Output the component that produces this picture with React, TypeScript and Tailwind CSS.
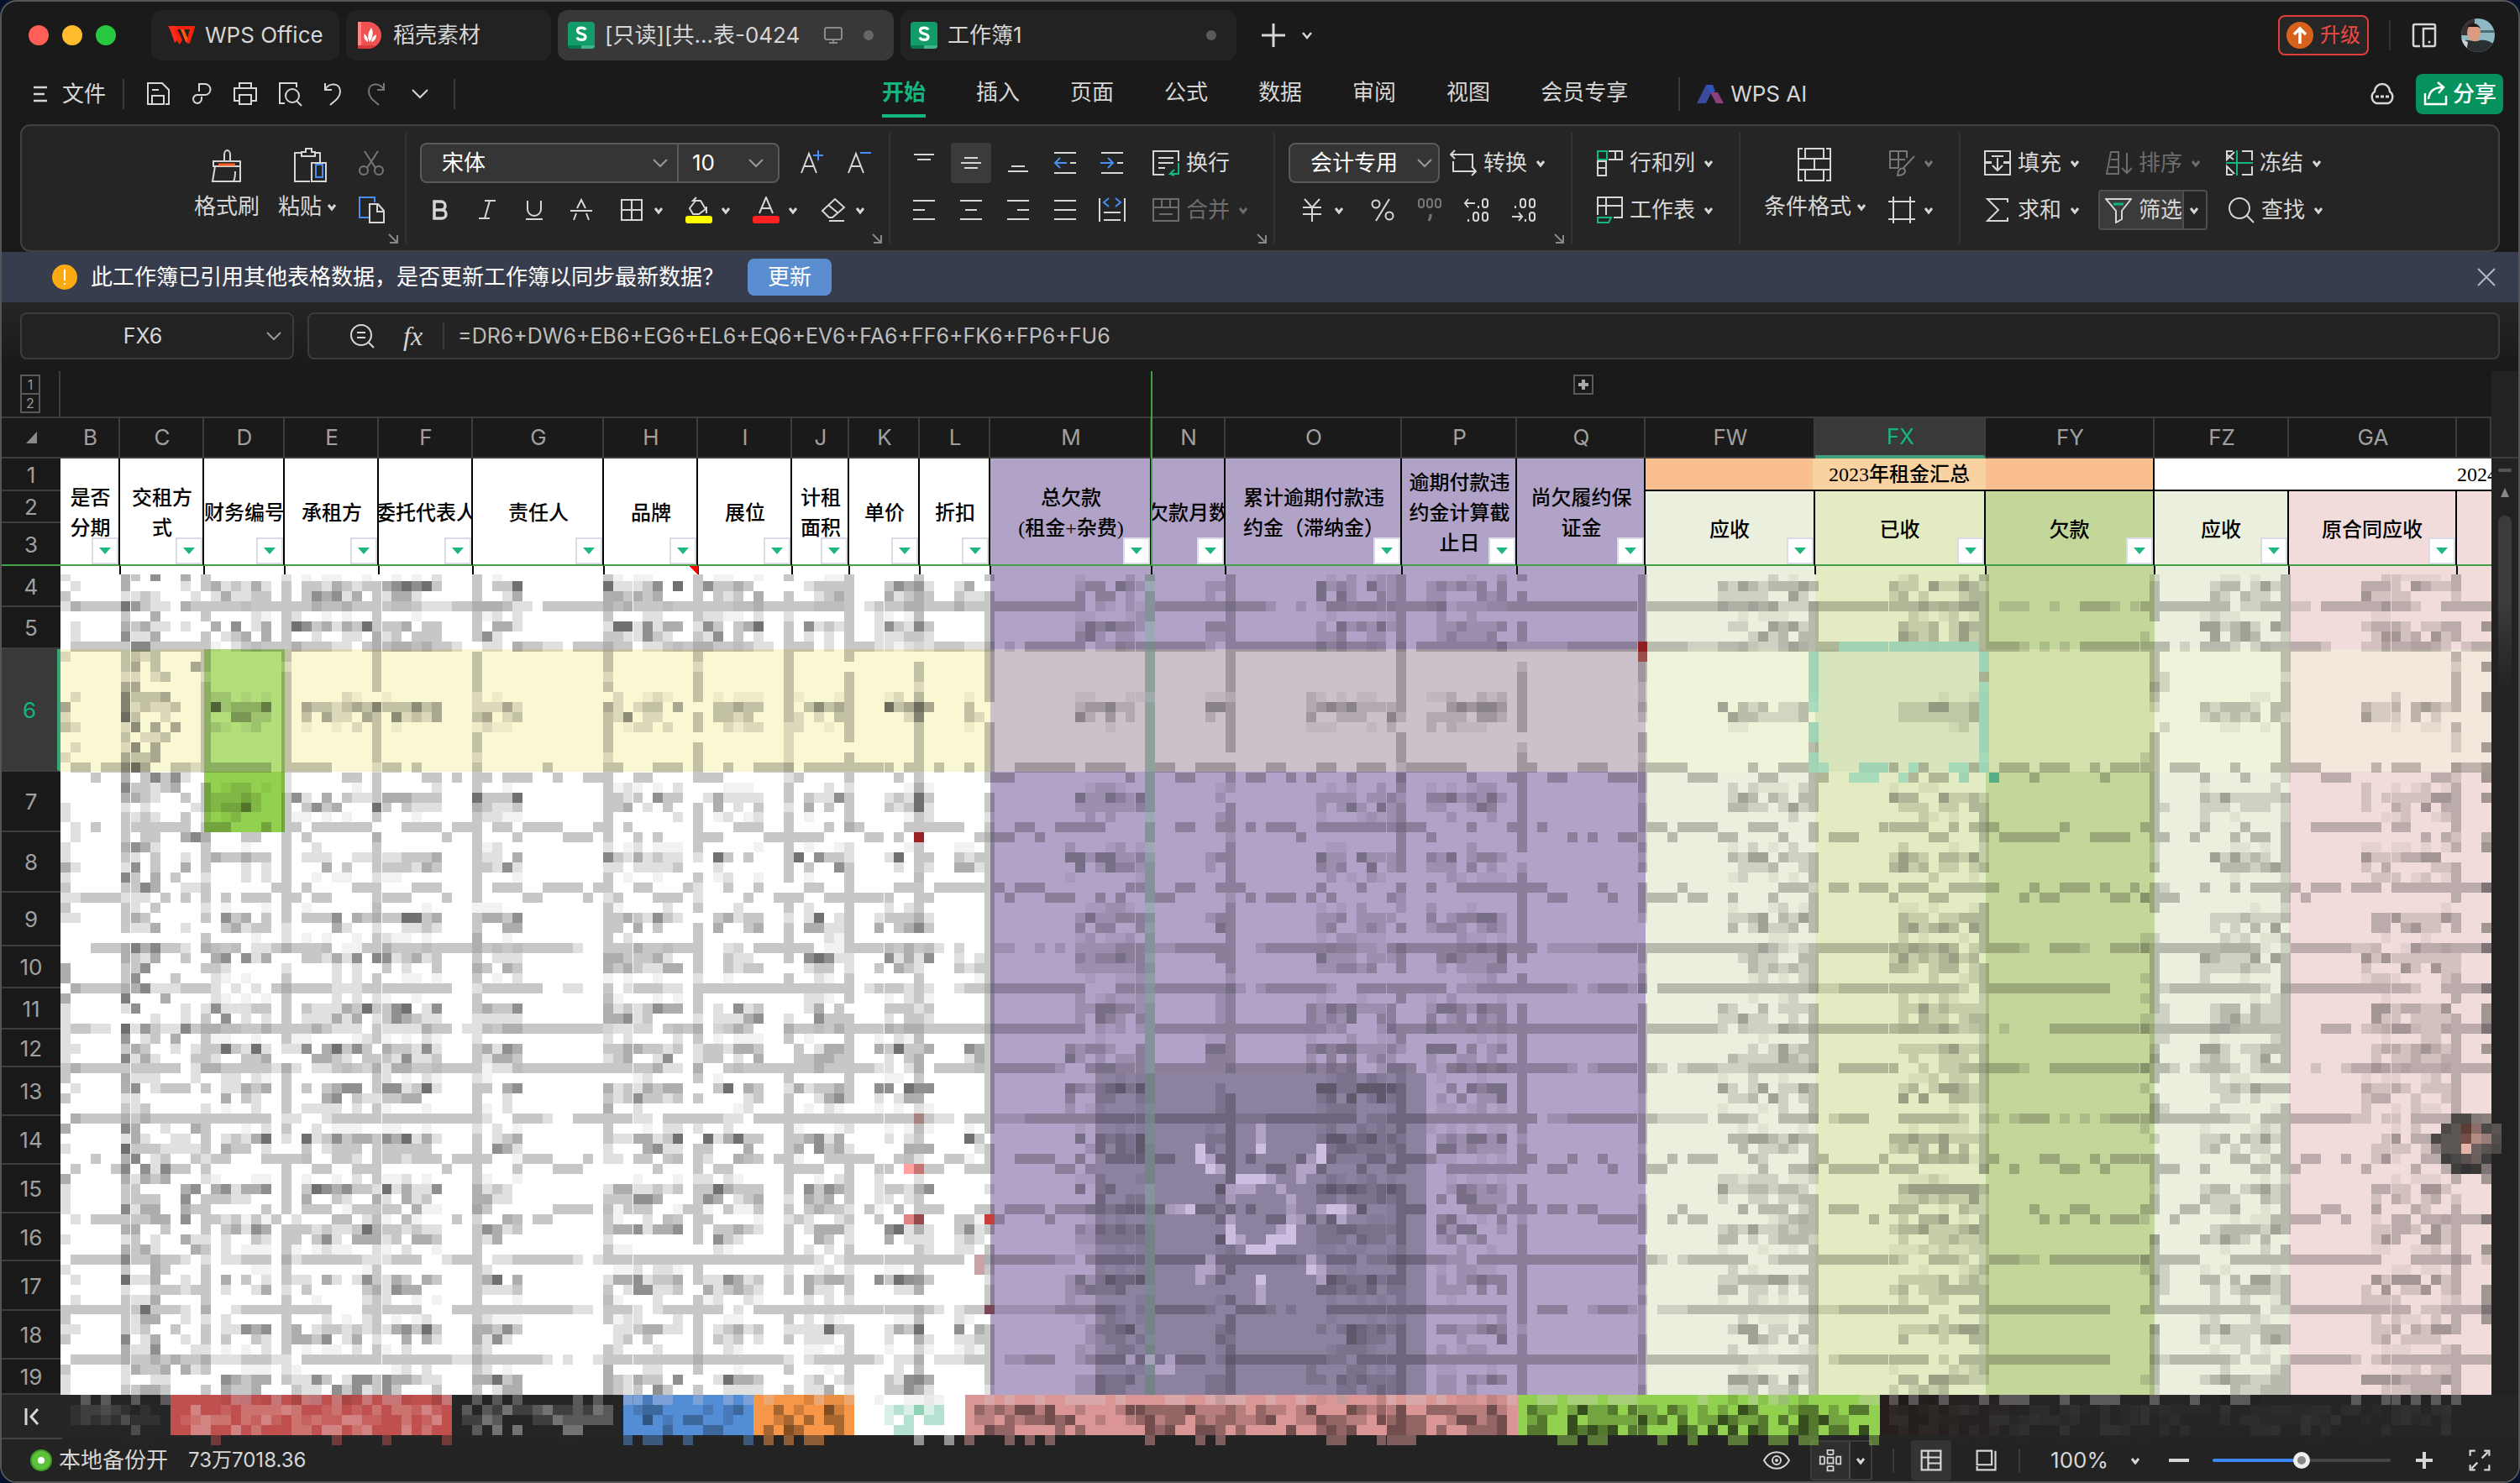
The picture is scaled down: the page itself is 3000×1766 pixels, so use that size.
import React from "react";
import clsx from "clsx";

type IconProps = { children: React.ReactNode; className?: string; box?: string };

const Icon = ({ children, className = "size-8", box = "0 0 32 32" }: IconProps) => (
  <svg
    viewBox={box}
    className={clsx("shrink-0", className)}
    fill="none"
    stroke="currentColor"
    strokeWidth="2"
    aria-hidden="true"
  >
    {children}
  </svg>
);

const Chevron = () => (
  <Icon className="size-6" box="0 0 24 24">
    <path d="M8 10l4 5 4-5" strokeWidth="3" />
  </Icon>
);

const WideChevron = () => (
  <Icon className="size-6 text-[#999]" box="0 0 24 24">
    <path d="M4 8l8 8 8-8" />
  </Icon>
);

/* ---------- TITULO ---------- */

const SheetLogo = () => (
  <Icon className="size-8" box="0 0 32 32">
    <g stroke="none">
      <rect width="32" height="32" rx="4" fill="#129c69" />
      <path d="M0 28h16v4H4a4 4 0 0 1-4-4z" fill="#087a4e" />
      <path d="M16 28h16a4 4 0 0 1-4 4H16z" fill="#3db587" />
    </g>
    <path
      d="M21 9.500C19.500 6.500 11.500 6 11.500 10.500c0 5 9.500 2.500 9.500 7.500 0 4.500-8.500 4.500-10 .5"
      stroke="#fff"
      strokeWidth="3.200"
    />
  </Icon>
);

const TitleBar = () => (
  <header className="flex h-[78px] items-center pl-8 pr-7 pt-0.5">
    <div className="flex gap-4">
      <button aria-label="关闭窗口" className="size-6 rounded-full bg-[#ff5f57]" />
      <button aria-label="最小化" className="size-6 rounded-full bg-[#febc2e]" />
      <button aria-label="最大化" className="size-6 rounded-full bg-[#28c840]" />
    </div>

    <nav className="ml-[42px] flex gap-2">
      <button className="flex h-[60px] w-56 items-center gap-3 rounded-xl bg-[#222] pl-5">
        <Icon className="size-8">
          <g stroke="none">
            <path d="M0 5h31c1 0 1.500 1 1 2l-6 18c-.5 1-3 1-3.500 0L15 9h-4l6 12-1.500 4c-.5 1.500-3 1.500-3.500 0z" fill="#f3230b" />
            <path d="M8 25L1 5h9l2 4H7.500l4 12z" fill="#ff2a1a" />
            <path d="M16 9h10l-3 10z" fill="#222" />
            <path d="M15 9h4l4.500 11-2 5z" fill="#ff5a10" />
          </g>
        </Icon>
        WPS Office
      </button>
      <button className="flex h-[60px] w-[244px] items-center gap-3 rounded-xl bg-[#222] pl-3">
        <Icon className="size-8">
          <g stroke="none">
            <path d="M2 0h12a16 16 0 0 1 0 32H2z" fill="#f0524f" />
            <path d="M2 0h4v32H2z" fill="#f88" />
            <path d="M2 28h22a16 16 0 0 1-10 4H2z" fill="#d33a38" />
            <path d="M16 24c-3-6-2-11 2-17 3 6 2 11-2 17zM14 24c-4-2-5-5-4.500-10 3.500 3 5 6 4.500 10zM18 24c0-4 2-7 6-9 0 5-2 8-6 9z" fill="#fff" />
          </g>
        </Icon>
        稻壳素材
      </button>
      <button className="flex h-[60px] w-[400px] items-center gap-3 rounded-xl bg-[#383838] px-3">
        <SheetLogo />
        [只读][共…表-0424
        <Icon className="ml-auto size-6 text-[#888]" box="0 0 24 24">
          <rect x="2" y="3" width="20" height="14" rx="2" />
          <path d="M12 17v4M7 21h10" />
        </Icon>
        <span className="mx-3 size-3 rounded-full bg-[#666]" />
      </button>
      <button className="flex h-[60px] w-[400px] items-center gap-3 rounded-xl bg-[#222] px-3">
        <SheetLogo />
        工作簿1
        <span className="ml-auto mr-3 size-3 rounded-full bg-[#5a5a5a]" />
      </button>
    </nav>

    <button aria-label="新建" className="ml-7">
      <Icon>
        <path d="M16 2v28M2 16h28" strokeWidth="3" />
      </Icon>
    </button>
    <button aria-label="更多标签" className="ml-3">
      <Icon className="size-6" box="0 0 24 24">
        <path d="M7 9l5 6 5-6" strokeWidth="2.500" />
      </Icon>
    </button>

    <button className="ml-auto flex h-12 items-center gap-2 rounded-lg border-2 border-[#e03e3e] bg-[#262626] px-2 text-2xl text-[#ee4a45]">
      <Icon>
        <circle cx="16" cy="16" r="16" fill="#d8621c" stroke="none" />
        <path d="M16 26V8M9 15l7-7 7 7" stroke="#fff" strokeWidth="3.500" />
      </Icon>
      升级
    </button>
    <span className="ml-6 h-9 w-0.5 bg-[#333]" />
    <button aria-label="手机视图" className="ml-6">
      <Icon>
        <path d="M11 29H5a2 2 0 0 1-2-2V5a2 2 0 0 1 2-2h22a2 2 0 0 1 2 2v22a2 2 0 0 1-2 2H15V8h13" strokeWidth="2.500" />
        <circle cx="22" cy="24" r="1.500" fill="currentColor" stroke="none" />
      </Icon>
    </button>
    <button aria-label="账户" className="ml-7 overflow-hidden rounded-full">
      <Icon className="size-10" box="0 0 40 40">
        <g stroke="none">
          <rect width="40" height="40" fill="#8fb9c2" />
          <path d="M22 14h18v3H22z" fill="#4e6b74" />
          <path d="M0 0h16v20H0z" fill="#3a2f33" />
          <ellipse cx="15" cy="17" rx="8" ry="11" fill="#d99c80" />
          <path d="M7 10c2-6 13-6 16 2l-3-2H9z" fill="#22191a" />
          <path d="M0 28c8-6 14 2 22-2 8-1 14 2 18 6v8H0z" fill="#2a3031" />
          <path d="M0 24l8 4-2 12H0z" fill="#cfd3d6" />
        </g>
      </Icon>
    </button>
  </header>
);

/* ---------- MENU ---------- */

const quickIcons: { name: string; art: React.ReactNode; dim?: boolean }[] = [
  {
    name: "保存",
    art: <path d="M8 28H4V3h17l8 8v17h-4M9 28V18h14v10zM9 11h8" />,
  },
  {
    name: "输出",
    art: <path d="M13 13V4h7a6 6 0 0 1 0 13h-8a5 5 0 1 0 4 5v-3" />,
  },
  {
    name: "打印",
    art: <path d="M9 9V3h14v6M8 24H3V9h26v15h-5M9 17h14v11H9z" />,
  },
  {
    name: "打印预览",
    art: (
      <>
        <path d="M25 8V3H5v24h6" />
        <circle cx="20" cy="18" r="8" />
        <path d="M25 24l6 6" />
      </>
    ),
  },
  { name: "撤销", art: <path d="M7 3v8h8M7 11c4-9 18-9 18 2 0 7-6 11-12 16" /> },
  { name: "恢复", dim: true, art: <path d="M25 3v8h-8M25 11C21 2 7 2 7 13c0 7 6 11 12 16" /> },
  { name: "更多", art: <path d="M7 11l9 9 9-9" /> },
];

const menus = ["开始", "插入", "页面", "公式", "数据", "审阅", "视图", "会员专享"];

const MenuBar = () => (
  <div className="flex h-[68px] items-center pb-1 pl-9 pr-[18px]">
    <button className="flex items-center gap-4">
      <Icon className="size-5" box="0 0 20 20">
        <path d="M2 2h16M2 10h13M2 18h16" strokeWidth="2.500" />
      </Icon>
      文件
    </button>
    <span className="ml-5 h-9 w-0.5 bg-[#3a3a3a]" />
    <div className="ml-6 flex items-center gap-5">
      {quickIcons.map(({ name, art, dim }) => (
        <button key={name} aria-label={name} className={clsx(dim && "text-[#777]")}>
          <Icon>{art}</Icon>
        </button>
      ))}
    </div>
    <span className="ml-6 h-9 w-0.5 bg-[#3a3a3a]" />

    <nav className="ml-[508px] flex gap-15">
      {menus.map((menu, i) => (
        <button
          key={menu}
          className={clsx(
            "h-14 border-b-4",
            i === 0 ? "border-[#13b67e] font-bold text-[#13b67e]" : "border-transparent"
          )}
        >
          {menu}
        </button>
      ))}
    </nav>
    <span className="ml-15 h-10 w-0.5 bg-[#3a3a3a]" />
    <button className="ml-5 flex items-center gap-2">
      <Icon>
        <g stroke="none">
          <path d="M0 27L11 5h8l1 3-9 19z" fill="#3b4a9c" />
          <path d="M11 5h8l3 8-6 2z" fill="#3353b8" />
          <path d="M16 14h9l7 13h-9z" fill="#8b3f7c" />
        </g>
      </Icon>
      WPS AI
    </button>

    <button aria-label="云服务" className="ml-auto">
      <Icon className="size-8">
        <path d="M9 27a8 8 0 0 1-2-14 9 9 0 0 1 18 0 8 8 0 0 1-2 14z" strokeWidth="2.500" />
        <path d="M8 19h4M14 19h4M20 19h4" strokeWidth="3" />
      </Icon>
    </button>
    <button className="ml-6 flex h-12 items-center gap-1 rounded-lg bg-[#06925d] px-2 font-medium text-white">
      <Icon>
        <path d="M3 15v13h25V18M7 22c1-10 7-14 17-14M18 2l7 6-6 7" strokeWidth="2.500" />
      </Icon>
      分享
    </button>
  </div>
);

/* ---------- RIBBON ---------- */

type ToolProps = { name: string; children: React.ReactNode; active?: boolean; dim?: boolean };

const Tool = ({ name, children, active, dim }: ToolProps) => (
  <button
    aria-label={name}
    className={clsx(
      "flex size-12 items-center justify-center rounded",
      active && "bg-[#3b3b3b]",
      dim && "text-[#777]"
    )}
  >
    <Icon>{children}</Icon>
  </button>
);

const DropTool = ({ name, children, dim }: ToolProps) => (
  <button aria-label={name} className={clsx("flex h-12 items-center pl-1", dim && "text-[#777]")}>
    <Icon className="mr-1 size-8">{children}</Icon>
    <Chevron />
  </button>
);

type LabelToolProps = { label: string; children: React.ReactNode; dim?: boolean; plain?: boolean };

const LabelTool = ({ label, children, dim, plain }: LabelToolProps) => (
  <button className={clsx("flex h-12 items-center whitespace-nowrap pl-2", dim && "text-[#6d6d6d]")}>
    <Icon className="mr-2 size-8">{children}</Icon>
    <span className="mr-1">{label}</span>
    {!plain && <Chevron />}
  </button>
);

const Group = ({
  children,
  className,
  launcher,
  last,
}: {
  children: React.ReactNode;
  className?: string;
  launcher?: boolean;
  last?: boolean;
}) => (
  <section
    className={clsx("relative my-2 flex pt-3", !last && "border-r-2 border-[#333]", className)}
  >
    {children}
    {launcher && (
      <button aria-label="更多设置" className="absolute bottom-0 right-2 text-[#888]">
        <Icon className="size-3" box="0 0 12 12">
          <path d="M1 1l9 9M11 2v9H2" />
        </Icon>
      </button>
    )}
  </section>
);

const Rows = ({ children }: { children: React.ReactNode }) => (
  <div className="flex flex-col items-start gap-2">{children}</div>
);

const Ribbon = () => (
  <div className="mx-[22px] flex h-[152px] rounded-xl border-2 border-[#414141] bg-[#252525]">
    <Group className="gap-4 pl-[202px] pr-4" launcher>
      <button className="flex h-26 w-[84px] flex-col items-center gap-2 pt-1">
        <Icon className="size-11" box="0 0 44 44">
          <path d="M19 18V10a3.500 5 0 1 1 7 0v8M6 18h32v6H6zM8 24L5 42h33V24M30 42c2-4 2-8 2-12" />
          <path d="M12 22h20" stroke="#ff5a1f" strokeWidth="3" />
        </Icon>
        格式刷
      </button>
      <button className="flex h-26 w-[82px] flex-col items-center gap-2 pt-1">
        <Icon className="size-11" box="0 0 44 44">
          <path d="M12 8H4v34h18M28 8h6v12M12 12V7h5V3h7v4h4v5zM24 42V20h17v22z" />
          <path d="M29 22h8v15h-8z" stroke="#4a8df0" />
        </Icon>
        <span className="flex items-center whitespace-nowrap">
          粘贴
          <Chevron />
        </span>
      </button>
      <div className="-ml-2 flex flex-col gap-2">
        <Tool name="剪切" dim>
          <path d="M8 2l13 20M24 2L11 22" />
          <circle cx="7" cy="25" r="5" />
          <circle cx="25" cy="25" r="5" />
        </Tool>
        <Tool name="复制">
          <path d="M13 25H2V1h18v6" stroke="#4a8df0" />
          <path d="M14 9h10l7 8v14H14zM23 9v9h8" />
        </Tool>
      </div>
    </Group>

    <Group className="pl-4 pr-3" launcher>
      <Rows>
        <div className="flex items-center">
          <div className="mr-[14px] flex h-12 items-center rounded-lg border-2 border-[#5a5a5a] bg-[#353535] text-white">
            <input aria-label="字体" defaultValue="宋体" className="w-[248px] bg-transparent pl-6 outline-none" />
            <button aria-label="选择字体" className="w-14 pl-6">
              <WideChevron />
            </button>
            <span className="h-full w-0.5 bg-[#5a5a5a]" />
            <input aria-label="字号" defaultValue="10" className="w-20 bg-transparent pl-4 outline-none" />
            <button aria-label="选择字号" className="w-[38px]">
              <WideChevron />
            </button>
          </div>
          <Tool name="增大字号">
            <path d="M4 28L13 5l9 23M7 20h12" />
            <path d="M24 1v12M18 7h12" stroke="#4a8df0" />
          </Tool>
          <span className="w-2" />
          <Tool name="减小字号">
            <path d="M4 28L13 5l9 23M7 20h12" />
            <path d="M18 4h13" stroke="#4a8df0" />
          </Tool>
        </div>
        <div className="flex gap-4">
          <div className="flex gap-2">
            <Tool name="加粗">
              <path d="M9 6h8a5 5 0 0 1 0 10H9zM9 16h9a5 5 0 0 1 0 10H9z" strokeWidth="3.500" />
            </Tool>
            <Tool name="倾斜">
              <path d="M13 5h13M6 26h13M19 5l-6 21" />
            </Tool>
            <Tool name="下划线">
              <path d="M8 5v10a8 8 0 0 0 16 0V5M6 27h20" />
            </Tool>
            <Tool name="删除线">
              <path d="M11 14l5-10 5 10M3 17h26M10 20l-3 8M22 20l3 8" />
            </Tool>
          </div>
          <DropTool name="边框">
            <path d="M4 4h24v24H4zM16 4v24M4 16h24" />
          </DropTool>
          <DropTool name="填充颜色">
            <path d="M13 1l-4 4h9l6 10-8 6H9l-4-7 7-9M25 12v8" />
            <rect x="0" y="23" width="32" height="9" rx="3" fill="#ff0" stroke="none" />
          </DropTool>
          <DropTool name="字体颜色">
            <path d="M8 20L16 1l8 19M11 14h10" />
            <rect x="0" y="23" width="32" height="9" rx="3" fill="#f22" stroke="none" />
          </DropTool>
          <DropTool name="清除">
            <path d="M11 25L3 17 18 3l11 10-14 12zM10 10l12 10M11 29h18" />
          </DropTool>
        </div>
      </Rows>
    </Group>

    <Group className="w-[458px] pl-4" launcher>
      <Rows>
        <div className="flex gap-2">
          <Tool name="顶端对齐">
            <path d="M4 6h24M8 12h16" />
          </Tool>
          <Tool name="垂直居中" active>
            <path d="M8 10h16M4 16h24M8 22h16" />
          </Tool>
          <Tool name="底端对齐">
            <path d="M8 20h16M4 26h24" />
          </Tool>
          <Tool name="减少缩进">
            <path d="M3 4h26M22 16h7M3 28h26" />
            <path d="M18 16H4M10 10l-6 6 6 6" stroke="#4a8df0" />
          </Tool>
          <Tool name="增加缩进">
            <path d="M3 4h26M22 16h7M3 28h26" />
            <path d="M2 16h15M11 10l6 6-6 6" stroke="#4a8df0" />
          </Tool>
          <div className="pl-2">
            <LabelTool label="换行" plain>
              <path d="M14 30H1V2h30v12M7 10h18M7 16h18M7 22h8" />
              <path d="M31 16v13H21l5-5M21 29l5 2" stroke="#13b67e" />
            </LabelTool>
          </div>
        </div>
        <div className="flex gap-2">
          <Tool name="左对齐">
            <path d="M3 5h26M3 16h14M3 27h26" />
          </Tool>
          <Tool name="水平居中">
            <path d="M3 5h26M9 16h14M3 27h26" />
          </Tool>
          <Tool name="右对齐">
            <path d="M3 5h26M15 16h14M3 27h26" />
          </Tool>
          <Tool name="两端对齐">
            <path d="M3 5h26M3 16h26M3 27h26" />
          </Tool>
          <Tool name="分散对齐">
            <path d="M1 2v28M31 2v28M6 19h20M6 28h20" />
            <path d="M12 2L6 7l6 5M20 2l6 5-6 5" stroke="#4a8df0" />
          </Tool>
          <div className="pl-2">
            <LabelTool label="合并" dim>
              <path d="M1 3h30v26H1zM1 13h30M11 3v10M21 3v10M8 21h16" />
            </LabelTool>
          </div>
        </div>
      </Rows>
    </Group>

    <Group className="w-[354px] pl-4" launcher>
      <Rows>
        <div className="flex items-center gap-1">
          <div className="relative">
            <select
              aria-label="数字格式"
              className="h-12 w-[180px] appearance-none rounded-lg border-2 border-[#5a5a5a] bg-[#353535] pl-6 text-white outline-none"
            >
              <option>会计专用</option>
            </select>
            <span className="pointer-events-none absolute right-1.5 top-3">
              <WideChevron />
            </span>
          </div>
          <LabelTool label="转换">
            <path d="M6 1L1 6l5 5M2 6h25v15M26 20l5 6-5 5M30 26H4V14" />
          </LabelTool>
        </div>
        <div className="flex gap-2 pl-2">
          <DropTool name="货币格式">
            <path d="M7 3l9 10 9-10M5 13h22M5 21h22M16 13v17" />
          </DropTool>
          <span />
          <Tool name="百分比">
            <circle cx="8" cy="9" r="4.500" />
            <circle cx="24" cy="23" r="4.500" />
            <path d="M24 3L8 29" />
          </Tool>
          <Tool name="千位分隔" dim>
            <rect x="3" y="3" width="6" height="10" rx="3" />
            <rect x="13" y="3" width="6" height="10" rx="3" />
            <rect x="23" y="3" width="6" height="10" rx="3" />
            <path d="M17 21v3l-2 5" strokeWidth="3" />
          </Tool>
          <Tool name="增加小数位">
            <rect x="23" y="3" width="6" height="10" rx="3" />
            <rect x="12" y="19" width="6" height="10" rx="3" />
            <rect x="23" y="19" width="6" height="10" rx="3" />
            <path d="M14 8H2M6 3L2 8l4 5M18 11v3M6 27v3" />
          </Tool>
          <Tool name="减少小数位">
            <rect x="12" y="3" width="6" height="10" rx="3" />
            <rect x="23" y="3" width="6" height="10" rx="3" />
            <rect x="23" y="19" width="6" height="10" rx="3" />
            <path d="M2 24h12M10 19l4 5-4 5M18 27v3M6 11v3" />
          </Tool>
        </div>
      </Rows>
    </Group>

    <Group className="w-[200px] pl-5">
      <Rows>
        <LabelTool label="行和列">
          <path d="M15 2h16v10H15M23 2v10M2 14h10v17H2zM2 22h10" />
          <path d="M2 2h11v10H2z" stroke="#13b67e" />
        </LabelTool>
        <LabelTool label="工作表">
          <path d="M2 22V1h29v24H21M2 11h29M12 1v21" />
          <path d="M2 25h16l-3 6H2z" stroke="#13b67e" />
        </LabelTool>
      </Rows>
    </Group>

    <Group className="w-[262px] gap-4 pl-5">
      <button className="flex h-26 flex-col items-center gap-2 pt-1">
        <Icon className="size-11" box="0 0 44 44">
          <path d="M8 3H3v38h5M36 3h5v38h-5M11 3h22v12H11zM11 28h22v13H11zM3 15h38M3 28h38M22 15v13" />
        </Icon>
        <span className="flex items-center whitespace-nowrap pl-2">
          条件格式
          <Chevron />
        </span>
      </button>
      <Rows>
        <DropTool name="单元格样式" dim>
          <path d="M12 22H2V2h20v8M12 2v20M2 12h18M31 8L18 22M11 31c0-6 3-10 8-8 3 5-2 8-8 8z" />
        </DropTool>
        <DropTool name="单元格">
          <path d="M6 0v32M26 0v32M0 6h32M0 27h32" />
        </DropTool>
      </Rows>
    </Group>

    <Group className="pl-5" last>
      <Rows>
        <div className="flex gap-4">
          <LabelTool label="填充">
            <path d="M9 15H1V2h30v13h-8M9 16H1v14h30V16h-8M16 10v15M10 19l6 6 6-6M9 8h14" />
          </LabelTool>
          <LabelTool label="排序" dim>
            <path d="M7 3h9v26H2zM5 21h11M7 12h9M26 4v24M20 22l6 6 6-6" />
          </LabelTool>
          <LabelTool label="冻结">
            <path d="M8 2H1v10l9-9M1 6l8 6M19 2h12v11M8 30H1V20l9 9M19 30h12V20" />
            <path d="M13 1v30M0 16h32" stroke="#13b67e" />
          </LabelTool>
        </div>
        <div className="flex gap-4">
          <LabelTool label="求和">
            <path d="M28 7V3H4l13 13L4 29h24v-4" />
          </LabelTool>
          <div className="flex h-12 items-center rounded border-2 border-[#4f4f4f]">
            <button className="flex h-full items-center gap-2 border-r-2 border-[#4f4f4f] bg-[#3b3b3b] pl-1.5">
              <Icon>
                <path d="M1 3h30L20 17v10l-7 4V17z" />
                <path d="M10 9h12" stroke="#13b67e" strokeWidth="3" />
              </Icon>
              筛选
            </button>
            <button aria-label="筛选选项" className="pr-0.5">
              <Chevron />
            </button>
          </div>
          <LabelTool label="查找">
            <circle cx="14" cy="14" r="12" />
            <path d="M22 22l9 9" />
          </LabelTool>
        </div>
      </Rows>
    </Group>
  </div>
);

/* ---------- AVISO Y FORMULA ---------- */

const Notice = () => (
  <div className="flex h-15 items-center bg-[#383d4d] pl-15 pr-[26px] text-white">
    <Icon className="size-[30px]" box="0 0 30 30">
      <circle cx="15" cy="15" r="15" fill="#fbaa14" stroke="none" />
      <path d="M15 6v13M15 22v2" stroke="#fff" />
    </Icon>
    <p className="ml-4">此工作簿已引用其他表格数据，是否更新工作簿以同步最新数据？</p>
    <button className="ml-7 h-11 rounded-lg bg-[#5b8ed1] px-6">更新</button>
    <button aria-label="关闭提示" className="ml-auto text-[#b4b7bf]">
      <Icon className="size-6" box="0 0 24 24">
        <path d="M2 2l20 20M22 2L2 22" />
      </Icon>
    </button>
  </div>
);

const FormulaBar = () => (
  <div className="flex h-[82px] gap-4 bg-linear-to-b from-[#252525] to-[#191919] px-[22px] pt-3">
    <div className="flex h-14 w-[326px] items-center rounded-lg border-2 border-[#3c3c3c] bg-[#222]">
      <input
        aria-label="名称框"
        defaultValue="FX6"
        className="w-[288px] bg-transparent text-center text-[25px] outline-none"
      />
      <WideChevron />
    </div>
    <div className="flex h-14 flex-1 items-center rounded-lg border-2 border-[#3c3c3c] bg-[#232323] pl-12">
      <Icon>
        <circle cx="14" cy="15" r="12" />
        <path d="M23 24l6 6M9 12h10M9 18h10" />
      </Icon>
      <span className="ml-8 font-['Liberation_Serif',serif] text-[32px] italic">fx</span>
      <span className="ml-6 h-8 w-0.5 bg-[#3c3c3c]" />
      <input
        aria-label="公式"
        defaultValue="=DR6+DW6+EB6+EG6+EL6+EQ6+EV6+FA6+FF6+FK6+FP6+FU6"
        className="ml-4 flex-1 bg-transparent text-[25px] text-[#bdbdbd] outline-none"
      />
    </div>
  </div>
);

/* ---------- HOJA ---------- */

type Column = {
  id: string;
  width: string;
  title?: string[];
  tint: string;
  hit: string;
  ink?: [number, number];
};

const white = "bg-white";
const cream = "bg-[#faf8d3]";
const violet = "bg-[#b1a2c7]";
const mauve = "bg-[#ccc0ca]";

// ink: first and last mosaic column that the cell's value covers
const columns: Column[] = [
  { id: "B", width: "w-[71px]", title: ["是否", "分期"], tint: white, hit: cream },
  { id: "C", width: "w-[100px]", title: ["交租方", "式"], tint: white, hit: cream },
  { id: "D", width: "w-[96px]", title: ["财务编号"], tint: white, hit: "bg-[#b3df7b]", ink: [21, 26] },
  { id: "E", width: "w-[112px]", title: ["承租方"], tint: white, hit: cream, ink: [29, 36] },
  { id: "F", width: "w-[112px]", title: ["委托代表人"], tint: white, hit: cream, ink: [37, 43] },
  { id: "G", width: "w-[156px]", title: ["责任人"], tint: white, hit: cream, ink: [47, 51] },
  { id: "H", width: "w-[112px]", title: ["品牌"], tint: white, hit: cream, ink: [60, 67] },
  { id: "I", width: "w-[112px]", title: ["展位"], tint: white, hit: cream, ink: [70, 75] },
  { id: "J", width: "w-[68px]", title: ["计租", "面积"], tint: white, hit: cream, ink: [79, 83] },
  { id: "K", width: "w-[84px]", title: ["单价"], tint: white, hit: cream, ink: [87, 92] },
  { id: "L", width: "w-[84px]", title: ["折扣"], tint: white, hit: cream, ink: [95, 97] },
  { id: "M", width: "w-[192px]", title: ["总欠款", "(租金+杂费)"], tint: violet, hit: mauve, ink: [106, 113] },
  { id: "N", width: "w-[88px]", title: ["欠款月数"], tint: violet, hit: mauve, ink: [120, 121] },
  { id: "O", width: "w-[210px]", title: ["累计逾期付款违", "约金（滞纳金）"], tint: violet, hit: mauve, ink: [130, 138] },
  { id: "P", width: "w-[137px]", title: ["逾期付款违", "约金计算截", "止日"], tint: violet, hit: mauve, ink: [142, 149] },
  { id: "Q", width: "w-[153px]", title: ["尚欠履约保", "证金"], tint: violet, hit: mauve },
  { id: "FW", width: "w-[202px]", tint: "bg-[#ebf0de]", hit: "bg-[#eff3da]", ink: [171, 179] },
  { id: "FX", width: "w-[203px]", tint: "bg-[#e2ebc1]", hit: "bg-[#d8e4bb]", ink: [188, 196] },
  { id: "FY", width: "w-[201px]", tint: "bg-[#c4d79b]", hit: "bg-[#d5e1ac]" },
  { id: "FZ", width: "w-[160px]", tint: "bg-[#ebf0de]", hit: "bg-[#eff3da]", ink: [219, 226] },
  { id: "GA", width: "w-[200px]", tint: "bg-[#f1dcdb]", hit: "bg-[#f4e7db]", ink: [235, 243] },
  { id: "", width: "", tint: "bg-[#f1dcdb]", hit: "bg-[#f4e7db]" },
];

const rows = [
  { n: 4, h: "h-[49px]", end: 723 },
  { n: 5, h: "h-[50px]", end: 773 },
  { n: 6, h: "h-[146px]", end: 919 },
  { n: 7, h: "h-[72px]", end: 991 },
  { n: 8, h: "h-[72px]", end: 1063 },
  { n: 9, h: "h-[64px]", end: 1127 },
  { n: 10, h: "h-[50px]", end: 1177 },
  { n: 11, h: "h-[49px]", end: 1226 },
  { n: 12, h: "h-[45px]", end: 1272 },
  { n: 13, h: "h-[58px]", end: 1330 },
  { n: 14, h: "h-[58px]", end: 1387 },
  { n: 15, h: "h-[58px]", end: 1446 },
  { n: 16, h: "h-[57px]", end: 1502 },
  { n: 17, h: "h-[59px]", end: 1561 },
  { n: 18, h: "h-[58px]", end: 1619 },
  { n: 19, h: "h-[42px]", end: 1680 },
];

const FilterButton = ({ id }: { id: string }) => (
  <button
    aria-label={`筛选 ${id}`}
    className="absolute bottom-0 right-0 flex size-8 items-center justify-center border-2 border-[#d9dbe6] bg-white"
  >
    <Icon className="h-2 w-[14px]" box="0 0 14 8">
      <path d="M0 0h14L7 8z" fill="#1fb77d" stroke="none" />
    </Icon>
  </button>
);

const RowHead = ({ n, active }: { n: number; active?: boolean }) => (
  <th
    scope="row"
    className={clsx(
      "border-b-2 border-[#3d3d3d] pt-0.5 text-center font-['Inter',sans-serif] text-[26px] font-normal leading-6",
      active ? "border-r-4 border-r-[#3aa57a] bg-[#393939] text-[#13b67e]" : "bg-[#191919] text-[#a0a0a0]"
    )}
  >
    {n}
  </th>
);

const groupTitles = ["应收", "已收", "欠款", "应收", "原合同应收"];

const Sheet = () => (
  <table className="w-full table-fixed border-separate border-spacing-0">
    <colgroup>
      <col className="w-[70px]" />
      {columns.map((c, i) => (
        <col key={i} className={c.width} />
      ))}
    </colgroup>
    <thead>
      <tr className="h-12 text-[#a0a0a0]">
        <td className="border-b-2 border-[#3d3d3d] pl-7">
          <Icon className="size-4" box="0 0 16 16">
            <path d="M14 1v14H1z" fill="#8a8a8a" stroke="none" />
          </Icon>
        </td>
        {columns.map((c, i) => (
          <th
            key={i}
            scope="col"
            className={clsx(
              "border-r-2 pl-0.5 font-normal leading-6",
              c.id === "FX"
                ? "border-b-4 border-b-[#3f9f7a] border-r-[#3d3d3d] bg-[#393939] text-[#13b67e]"
                : "border-b-2 border-[#3d3d3d]"
            )}
          >
            {c.id}
          </th>
        ))}
      </tr>
    </thead>
    <tbody className="font-['Liberation_Serif','Noto_Sans_CJK_SC',serif] text-2xl font-medium leading-9 text-black">
      <tr className="h-[39px]">
        <RowHead n={1} />
        {columns.slice(0, 16).map((c) => (
          <td
            key={c.id}
            rowSpan={3}
            className={clsx(
              "relative overflow-hidden border-b-2 border-r-2 border-b-[#43a047] border-r-black pl-0.5 pt-1",
              c.tint
            )}
          >
            <div className="flex flex-col items-center whitespace-nowrap">
              {c.title?.map((line) => (
                <span key={line}>{line}</span>
              ))}
            </div>
            <FilterButton id={c.id} />
          </td>
        ))}
        <td
          colSpan={3}
          className="border-b-2 border-r-2 border-black bg-[linear-gradient(90deg,#f9bf8f_33%,#f9d2a2_33%,#f9d2a2_67%,#f9bf8f_67%)] text-center"
        >
          2023年租金汇总
        </td>
        <td colSpan={2} className="border-b-2 border-black bg-white" />
        <td className="overflow-hidden whitespace-nowrap border-b-2 border-black bg-white">2024</td>
      </tr>
      <tr className="h-[38px]">
        <RowHead n={2} />
        {columns.slice(16).map((c, i) => (
          <td
            key={i}
            rowSpan={2}
            className={clsx(
              "relative border-b-2 border-b-[#43a047] pt-1 text-center",
              c.id && "border-r-2 border-r-black",
              c.tint
            )}
          >
            {groupTitles[i]}
            {c.id && <FilterButton id={c.id} />}
          </td>
        ))}
      </tr>
      <tr className="h-[51px]">
        <th
          scope="row"
          className="border-b-2 border-[#43a047] bg-[#191919] pt-0.5 text-center font-['Inter',sans-serif] text-[26px] font-normal leading-6 text-[#a0a0a0]"
        >
          3
        </th>
      </tr>
    </tbody>
    <tbody>
      {rows.map(({ n, h }) => (
        <tr key={n} className={h}>
          <RowHead n={n} active={n === 6} />
          {columns.map((c, i) => (
            <td key={i} className={n === 6 ? c.hit : n === 7 && c.id === "D" ? "bg-[#92d14f]" : c.tint} />
          ))}
        </tr>
      ))}
    </tbody>
  </table>
);

/* ---------- MOSAICO ---------- */

const CELL = 11.96;
const TOP = 680.4;
const edges = [
  143, 243, 339, 451, 563, 719, 831, 943, 1011, 1095, 1179, 1371, 1459, 1669, 1806, 1959, 2161, 2364, 2565, 2725, 2925,
];

const rnd = (x: number, y: number) => {
  const n = Math.sin(x * 127.1 + y * 311.7) * 43758.5453;
  return n - Math.floor(n);
};

const square = (k: number, r: number) => {
  const y = Math.max(TOP + r * CELL, 684);
  const bottom = TOP + (r + 1) * CELL;
  return `M${(k * CELL).toFixed(1)} ${y.toFixed(1)}h${CELL}V${bottom.toFixed(1)}h${-CELL}z`;
};

const shades = [0.05, 0.12, 0.22, 0.32, 0.44, 0.56];

const buildInk = () => {
  const paths = shades.map(() => "");
  const put = (k: number, r: number, level: number) => {
    paths[Math.max(0, Math.min(5, level))] += square(k, r);
  };
  const level = (v: number) => (v > 0.94 ? 5 : v > 0.82 ? 4 : v > 0.58 ? 3 : v > 0.28 ? 2 : 1);

  // column rules
  for (const x of edges) {
    const k = Math.floor((x + 1) / CELL);
    for (let r = 0; r < 82; r++) {
      const v = rnd(k, r + 3);
      if (v > 0.3) put(k, r, 2);
      else if (v > 0.12) put(k, r, 1);
    }
  }

  let start = 674;
  for (const { n, end } of rows) {
    // row rules
    const pos = (end - TOP) / CELL;
    const r = Math.floor(pos);
    const near = Math.abs(pos - Math.round(pos)) < 0.12;
    if (r < 82) {
      for (let k = 7; k < 248; k++) {
        if (near) {
          const a = rnd(Math.floor(k / 1.4), Math.round(pos) * 2);
          if (a > 0.55) put(k, Math.round(pos) - 1, 2);
          else if (a < 0.4 && rnd(k, r) > 0.25) put(k, Math.round(pos), 2);
        } else {
          const a = rnd(Math.floor(k / 3), r);
          if (a > 0.3) put(k, r, 2);
          else if (rnd(k, r) > 0.5) put(k, r, 1);
        }
      }
    }

    // values
    const mid = Math.round(((start + end) / 2 - TOP) / CELL);
    for (const c of columns) {
      if (!c.ink) continue;
      const [a, b] = c.ink;
      const from = a + Math.floor(rnd(a, n) * 2);
      const fade = a > 100 ? 0.2 : 0;
      for (let k = from; k <= b; k++) {
        if (c.id === "L" && n % 2) continue;
        if (rnd(k, mid) > 0.1) put(k, mid - 1, level(rnd(k, mid + 7) - fade));
        if (rnd(k, mid + 1) > 0.3) put(k, mid, level(rnd(k, mid + 9) - 0.1 - fade));
        if (rnd(k, mid + 2) > 0.6) put(k, mid - 2, rnd(k, mid) > 0.7 ? 1 : 0);
        if (rnd(k, mid + 3) > 0.6) put(k, mid + 1, rnd(k, mid + 5) > 0.6 ? 1 : 0);
      }
    }
    start = end;
  }

  // wrapped payment terms in column C
  for (let r = 0; r < 82; r++) {
    for (let k = 12; k < 20; k++) {
      const v = rnd(k * 3, r * 5);
      const density = k < 16 ? 0.75 : 0.3;
      if (v < density) put(k, r, level(rnd(k, r * 7) - 0.1));
    }
    if (rnd(r, 5) > 0.45) put(6, r, level(rnd(r, 9) - 0.2));
    if (rnd(r, 8) > 0.7) put(7, r, 1);
    if (rnd(r, 12) > 0.7) put(247, r, 3);
    for (let k = 213; k < 216; k++) if (rnd(k, r) > 0.86) put(k, r, 1);
  }
  return paths;
};

const ink = buildInk();

const cells = (list: [number, number[]][]) =>
  list.map(([r, ks]) => ks.map((k) => square(k, r)).join("")).join("");

const sunBright = cells([
  [57, [119, 125, 131]],
  [58, [119, 131]],
  [59, [120]],
  [60, [123, 124, 125]],
  [63, [118, 132, 133]],
  [65, [122, 128]],
  [66, [122, 126, 127, 128]],
  [67, [124, 125, 126]],
  [69, [130]],
  [70, [125]],
]);

const sunSoft = cells([
  [55, [125]],
  [56, [125]],
  [58, [120, 130]],
  [59, [121, 130, 129]],
  [60, [126, 129]],
  [61, [122, 123, 124, 127]],
  [62, [122, 128]],
  [63, [116, 117, 128, 131, 134]],
  [64, [122, 128, 129, 133]],
  [65, [127]],
  [66, [123]],
  [68, [120, 130]],
  [69, [119, 120, 131]],
  [70, [119, 131]],
  [71, [125]],
  [72, [125]],
  [78, [112, 114, 116]],
  [79, [115, 116]],
]);

const spots: [number, number, string][] = [
  [91, 26, "#9a2224"],
  [91, 54, "#a58180"],
  [90, 59, "#ffa3a3"],
  [91, 59, "#c87474"],
  [90, 64, "#e08484"],
  [91, 64, "#984a4b"],
  [98, 64, "#c83c3c"],
  [97, 68, "#c9a3a3"],
  [97, 69, "#c9a3a3"],
  [98, 73, "#784858"],
  [163, 7, "#8f1f1f"],
  [163, 8, "#9a5048"],
  [198, 20, "#58ae84"],
];

const bubble: [number, number, string][] = [
  [244, 54, "#4c4844"], [245, 54, "#4c4844"], [246, 54, "#827876"], [247, 54, "#8b7f7e"],
  [243, 55, "#4e4946"], [244, 55, "#5b5553"], [245, 55, "#5b3d35"], [246, 55, "#8d6c66"], [247, 55, "#4c4a48"], [248, 55, "#5a5553"],
  [242, 56, "#4a4846"], [243, 56, "#5b5755"], [244, 56, "#5b5755"], [245, 56, "#754f45"], [246, 56, "#b58d84"], [247, 56, "#9a7d77"], [248, 56, "#544f4d"],
  [242, 57, "#8f8483"], [243, 57, "#5b5755"], [244, 57, "#5b5755"], [245, 57, "#e5b5a8"], [246, 57, "#6c615e"], [247, 57, "#5b5452"], [248, 57, "#4c4846"],
  [243, 58, "#403f3d"], [244, 58, "#4a4846"], [245, 58, "#5b5250"], [246, 58, "#6d5d5b"], [247, 58, "#3e3e3d"],
  [244, 59, "#403f3d"], [245, 59, "#333"], [246, 59, "#383838"], [247, 59, "#7d7473"],
];

const selection = () => {
  let d = "";
  for (let k = 181; k < 197; k++) {
    if (rnd(k, 1) > 0.25) d += square(k, 7);
    if (rnd(k, 2) > 0.7) d += square(k, 19);
    if (rnd(k, 4) > 0.7) d += square(k, 20);
  }
  for (let r = 8; r < 20; r++) {
    if (rnd(r, 3) > 0.15) d += square(180, r);
    if (rnd(r, 6) > 0.2) d += square(197, r);
  }
  return d;
};

const sheetTabs = [
  { from: 6, to: 17, width: "w-[129px]", tone: "bg-[#252525]", fill: "#252525", mark: "#fff", weight: 0.12 },
  { from: 17, to: 45, width: "w-[335px]", tone: "bg-[#c0504d]", fill: "#c0504d", mark: "#fff", weight: 0.2 },
  { from: 45, to: 62, width: "w-[204px]", tone: "bg-[#252525]", fill: "#252525", mark: "#fff", weight: 0.24 },
  { from: 62, to: 75, width: "w-[155px]", tone: "bg-[#538dd5]", fill: "#538dd5", mark: "#000", weight: 0.26 },
  { from: 75, to: 85, width: "w-[120px]", tone: "bg-[#f79646]", fill: "#f79646", mark: "#000", weight: 0.32 },
  { from: 87, to: 95, width: "w-[132px]", tone: "bg-white", fill: "#fff", mark: "#28aa78", weight: 0.35 },
  { from: 96, to: 151, width: "w-[658px]", tone: "bg-[#d99694]", fill: "#d99694", mark: "#000", weight: 0.32 },
  { from: 151, to: 187, width: "w-[431px]", tone: "bg-[#92d050]", fill: "#92d050", mark: "#000", weight: 0.42 },
  { from: 187, to: 245, width: "flex-1", tone: "bg-linear-to-r from-[#251e1c] to-[#252525] to-30%", fill: "#252525", mark: "#fff", weight: 0.04 },
];

const TabInk = () => (
  <>
    {sheetTabs.map((t) => {
      const layers = ["", "", ""];
      let crown = "";
      let drip = "";
      for (let k = t.from; k < t.to; k++) {
        if (rnd(k, 82) > 0.6) crown += square(k, 82);
        if (rnd(k, 86) > 0.72) drip += square(k, 86);
        if (k === t.from || k === t.to - 1) continue;
        for (let r = 83; r < 86; r++) {
          const v = rnd(k, r);
          if (r < 85 ? v > 0.25 : v > 0.6) layers[v > 0.85 ? 2 : v > 0.55 ? 1 : 0] += square(k, r);
        }
      }
      return (
        <g key={t.from}>
          <path d={crown} fill="#d8d2dc" fillOpacity="0.3" />
          <path d={drip} fill={t.fill} fillOpacity="0.5" />
          {layers.map((d, i) => (
            <path key={i} d={d} fill={t.mark} fillOpacity={(t.weight * (i + 1)) / 2} />
          ))}
        </g>
      );
    })}
  </>
);

const Mosaic = () => (
  <svg
    viewBox="72 674 2906 1050"
    width="2906"
    height="1050"
    shapeRendering="crispEdges"
    className="pointer-events-none absolute left-[70px] top-[232px]"
    aria-hidden="true"
  >
    {edges.map((x) => (
      <path key={x} d={`M${x - 1} 674h2v10h-2z`} fill="#000" />
    ))}
    <path d="M820 674h11v10z" fill="#f00" />
    <rect x={109 * CELL} y={TOP + 50 * CELL} width={33 * CELL} height={32 * CELL} fill="#1c1a26" fillOpacity="0.24" />
    {ink.map((d, i) => (
      <path key={i} d={d} fill="#000" fillOpacity={shades[i]} />
    ))}
    <rect x={114 * CELL} y="684" width={CELL} height="977" fill="#7fae9a" fillOpacity="0.4" />
    <path d={selection()} fill="#9fd8b8" fillOpacity="0.85" />
    <path d={sunSoft} fill="#c9bbe0" fillOpacity="0.6" />
    <path d={sunBright} fill="#d3c5e8" fillOpacity="0.9" />
    {[...spots, ...bubble].map(([k, r, fill]) => (
      <path key={`${k}-${r}`} d={square(k, r)} fill={fill} />
    ))}
    <TabInk />
  </svg>
);

const Workspace = () => (
  <main className="relative">
    <div className="flex">
      <div className="min-w-0 flex-1">
        <div className="flex h-14 border-b-2 border-[#3d3d3d] bg-[#191919]">
          <div className="flex w-[70px] flex-col items-center border-r-2 border-[#3d3d3d] pt-1 text-base leading-5 text-[#999]">
            <button className="w-6 border-2 border-[#5a5a5a]">1</button>
            <button className="-mt-0.5 w-6 border-2 border-[#5a5a5a]">2</button>
          </div>
          <button aria-label="展开分组" className="ml-[1801px] mt-1 h-6 border-2 border-[#5a5a5a] text-[#aaa]">
            <Icon className="size-5" box="0 0 20 20">
              <path d="M10 4v12M4 10h12" strokeWidth="4" />
            </Icon>
          </button>
        </div>
        <Sheet />
      </div>
      <div className="flex w-8 flex-col items-center bg-[#222]">
        <span className="h-[104px] w-full border-b-2 border-[#3d3d3d]" />
        <span className="mt-3 h-1 w-4 rounded bg-[#555]" />
        <Icon className="mt-4 size-4" box="0 0 16 16">
          <path d="M3 14h10L8 3z" fill="#888" stroke="none" />
        </Icon>
        <span className="mt-5 w-4 flex-1 rounded-t-lg bg-linear-to-b from-[#3b3b3b] from-10% to-[#222] to-20%" />
      </div>
    </div>

    <div className="flex h-[53px] bg-[#252525]">
      <button aria-label="第一个工作表" className="flex w-[72px] items-center justify-center border-b-2 border-[#444]">
        <Icon className="size-8">
          <path d="M9 6v20M23 7l-8 9 8 9" strokeWidth="3" />
        </Icon>
      </button>
      <div className="flex h-12 flex-1">
        {sheetTabs.map((t, i) => (
          <button key={t.from} aria-label={`工作表 ${i + 1}`} className={clsx(t.width, t.tone)} />
        ))}
      </div>
    </div>

    {/* freeze line */}
    <div className="absolute left-[1368px] top-0 h-[242px] w-0.5 bg-[#43a047]" />
    <Mosaic />
  </main>
);

const StatusBar = () => (
  <footer className="flex h-[50px] items-center bg-[#232323] pl-[34px] pr-8">
    <Icon className="size-[26px]" box="0 0 26 26">
      <circle cx="13" cy="13" r="12" fill="#5dc13b" stroke="#3f9a26" />
      <circle cx="13" cy="13" r="4" fill="#fff" stroke="none" />
    </Icon>
    <span className="ml-2">本地备份开</span>
    <span className="ml-6 text-2xl">73万7018.36</span>

    <button aria-label="护眼模式" className="ml-auto">
      <Icon>
        <path d="M1 16C8 3 24 3 31 16 24 29 8 29 1 16z" />
        <circle cx="16" cy="16" r="5" />
        <circle cx="16" cy="16" r="1" />
      </Icon>
    </button>
    <button aria-label="阅读模式" className="ml-6 flex h-12 items-center rounded border-2 border-[#3c3c3c]">
      <span className="flex h-full items-center border-r-2 border-[#4a4a4a] bg-[#302f2f] px-2">
        <Icon className="size-7">
          <path d="M12 12h8v8h-8zM12 8V2h8v6M12 24v6h8v-6M8 11H2v10h6M24 11h6v10h-6M12 8h8M12 24h8M8 11v10M24 11v10" />
        </Icon>
      </span>
      <Chevron />
    </button>
    <span className="ml-6 h-7 w-0.5 bg-[#3a3a3a]" />
    <button aria-label="普通视图" className="ml-5 flex size-12 items-center justify-center rounded bg-[#353333]">
      <Icon className="size-7">
        <path d="M3 3h26v26H3zM3 12h26M12 3v26M12 20h17" strokeWidth="2.500" />
      </Icon>
    </button>
    <button aria-label="分页预览" className="ml-7">
      <Icon className="size-7">
        <path d="M3 3h20v19H3zM28 3v26H3v-5" strokeWidth="2.500" />
      </Icon>
    </button>
    <span className="ml-6 h-7 w-0.5 bg-[#3a3a3a]" />
    <button className="ml-9 flex items-center gap-5">
      100%
      <Chevron />
    </button>
    <button aria-label="缩小" className="ml-6">
      <Icon>
        <path d="M4 16h24" strokeWidth="4" />
      </Icon>
    </button>
    <input
      type="range"
      aria-label="缩放"
      min="0"
      max="200"
      defaultValue="100"
      className="mx-6 h-1 w-[212px] appearance-none rounded bg-linear-to-r from-[#3d86f5] from-50% to-[#444] to-50% [&::-webkit-slider-thumb]:size-5 [&::-webkit-slider-thumb]:appearance-none [&::-webkit-slider-thumb]:rounded-full [&::-webkit-slider-thumb]:border-5 [&::-webkit-slider-thumb]:border-[#eee] [&::-webkit-slider-thumb]:bg-[#888]"
    />
    <button aria-label="放大">
      <Icon className="size-8">
        <path d="M16 6v20M6 16h20" strokeWidth="4" />
      </Icon>
    </button>
    <button aria-label="全屏" className="ml-9">
      <Icon className="size-7">
        <path d="M3 10V3h7M22 3h7v7M29 22v7h-7M10 29H3v-7M27 5l-8 8M5 27l8-8" strokeWidth="2.500" />
      </Icon>
    </button>
  </footer>
);

const App = () => {
  return (
    <div className="bg-[#07132b] font-['Inter','Noto_Sans_CJK_SC',sans-serif] text-[26px] leading-10 text-[#d6d6d6]">
      <div className="overflow-hidden rounded-[20px] border-2 border-[#555] bg-[#1a1a1b]">
        <TitleBar />
        <MenuBar />
        <Ribbon />
        <Notice />
        <FormulaBar />
        <Workspace />
        <StatusBar />
      </div>
    </div>
  );
};

export default App;
